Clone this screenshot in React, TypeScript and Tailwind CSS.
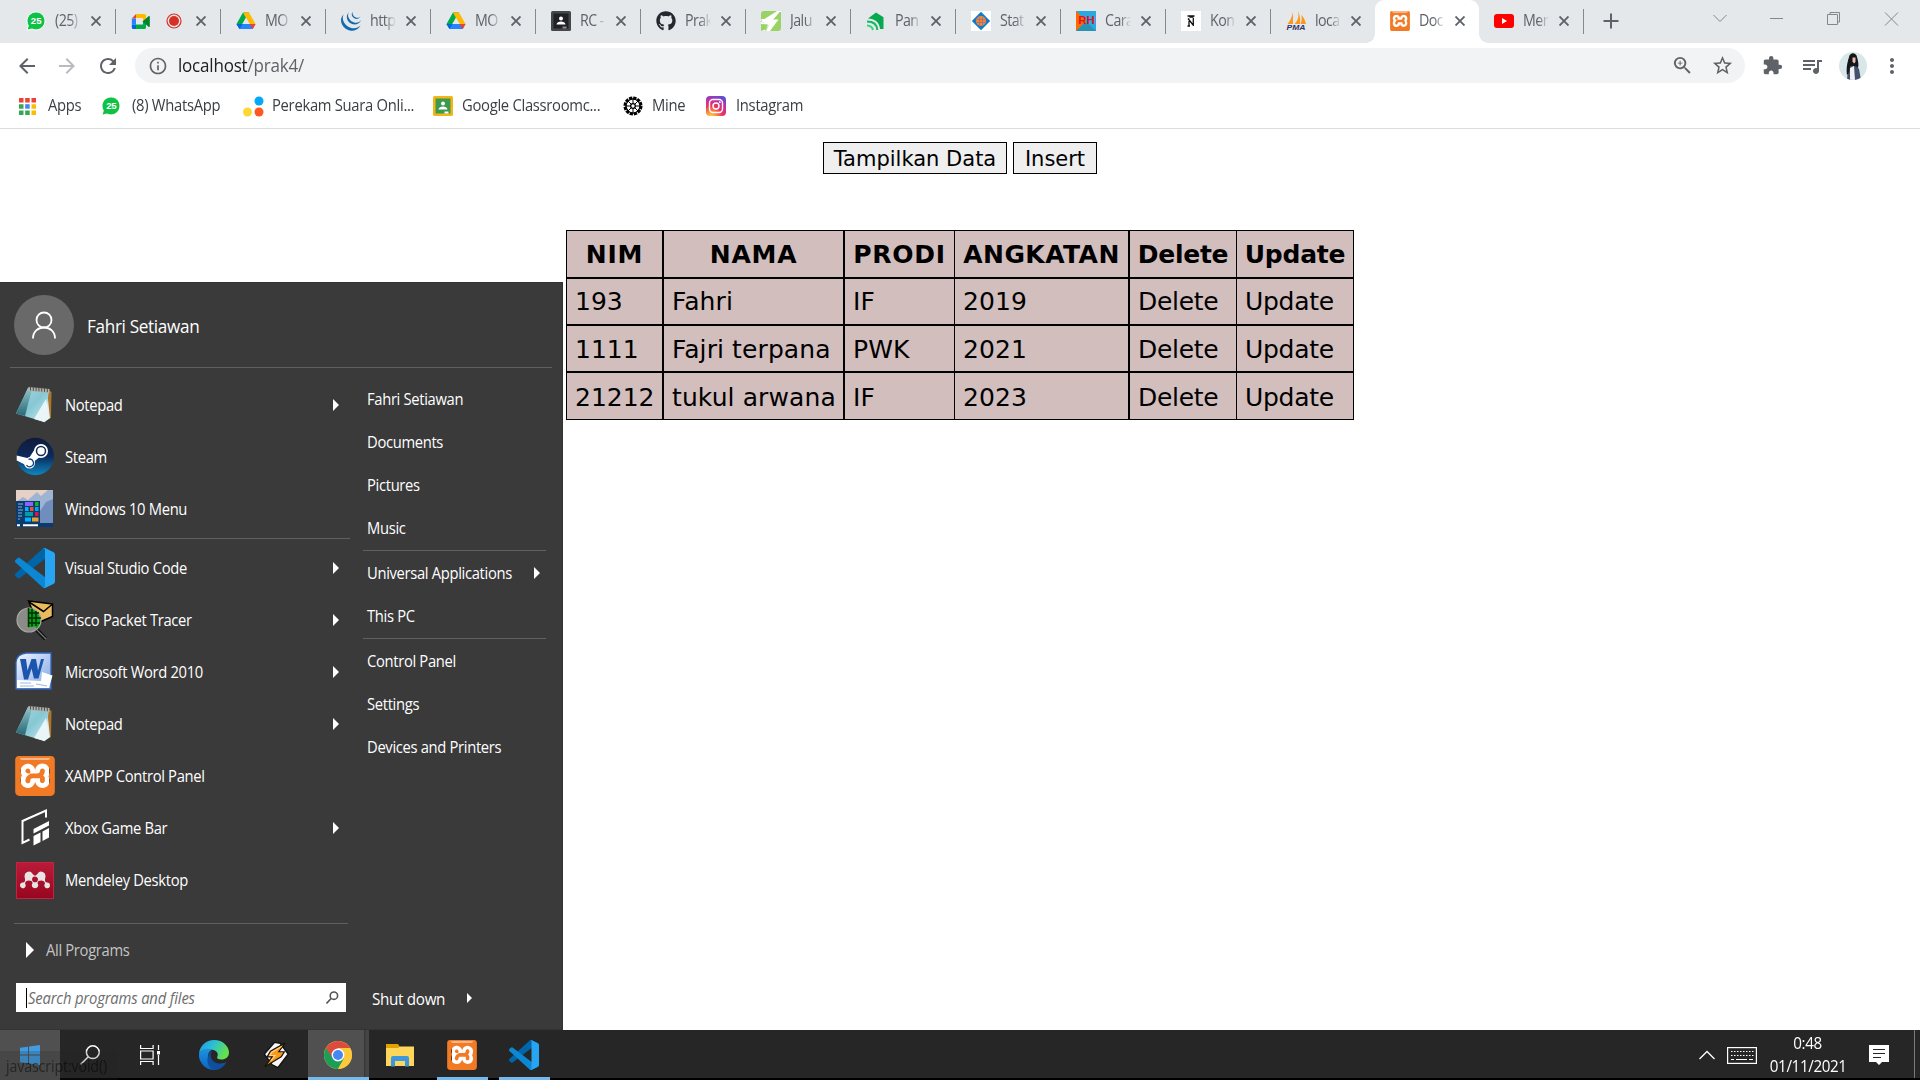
import React from "react";
import { FaGithub } from "react-icons/fa";
import { SiJquery, SiXampp, SiMendeley } from "react-icons/si";
import { MdExtension, MdQueueMusic, MdStarBorder, MdZoomIn, MdMoreVert, MdRefresh, MdArrowBack, MdArrowForward, MdInfoOutline } from "react-icons/md";

type P = { className?: string };

const WhatsApp = ({ className = "" }: P) => (
  <svg viewBox="0 0 20 20" className={className}>
    <path d="M1 19.2 2.3 14.6A9 9 0 1 1 6 18z" fill="#0fc144" stroke="#fff" strokeWidth="1" />
    <text x="10.2" y="13.4" fontSize="9.6" fontWeight="700" fill="#fff" textAnchor="middle" fontFamily="Liberation Sans, sans-serif">25</text>
  </svg>
);

const Meet = () => (
  <svg viewBox="0 0 20 20" className="size-5">
    <path d="M5 3h8.5a1.5 1.5 0 0 1 1.5 1.5V8l-3 2V7H5z" fill="#ffba00" />
    <path d="M5 3v4.5H.8z" fill="#ea4335" />
    <path d="M.8 7.500H5v6H.8z" fill="#2684fc" />
    <path d="M.8 13.500H5V18H2.300A1.500 1.500 0 0 1 .8 16.500z" fill="#0066da" />
    <path d="M5 13.500h7V10l3 2.500v4a1.500 1.500 0 0 1-1.500 1.500H5z" fill="#00ac47" />
    <path d="m11.500 10.400 6-5.200c.6-.5 1.300-.2 1.300.5v9.600c0 .7-.7 1-1.300.5z" fill="#00832d" />
  </svg>
);

const Drive = () => (
  <svg viewBox="0 0 20 18" className="size-5">
    <path d="M7 .5h6l-3 5.200z" fill="#188038" />
    <path d="M7 .500 10 5.700 4 16.500.500 12z" fill="#00ac47" />
    <path d="M7 .500h6l6.500 11.500h-6z" fill="#ffba00" />
    <path d="M.500 12h19l-2.800 5H3.500z" fill="#2684fc" />
    <path d="M13.500 12h6l-2.800 5z" fill="#ea4335" />
    <path d="M.500 12h6l-3 5z" fill="#0066da" />
    <path d="m10 5.700 3.600 6.300H6.400z" fill="#e4e8eb" />
  </svg>
);

const Classroom = ({ bg, board, edge }: { bg: string; board: string; edge: string }) => (
  <svg viewBox="0 0 20 20" className="size-5 shrink-0">
    <rect width="20" height="20" rx="1.500" fill={edge} />
    <rect x="2.500" y="2.500" width="15" height="15" fill={board} />
    <circle cx="10" cy="7.500" r="2" fill="#fff" />
    <path d="M5.500 13.500c0-2 2.500-3 4.500-3s4.500 1 4.500 3z" fill="#fff" />
    <rect x="11.500" y="15.500" width="4" height="2" fill={bg} />
  </svg>
);

const Jalur = () => (
  <svg viewBox="0 0 20 20" className="size-5">
    <rect width="20" height="20" rx="3" fill="#9ad268" />
    <path d="M16.500 0 6 8H0l2 4h7l-5 8H0v-8.500L5 8 16 0h2.500L12 8.500h5.500L9 20H5l4-8z" fill="#fff" />
    <path d="M16.500 0H20v2L11 9h4l-2 4-5 6.500L10 12H3l-3-2z" fill="#fff" />
    <path d="M18.500 1H20v7h-7z" fill="#9ad268" />
    <path d="m0 13 7 .500-2 5L0 20z" fill="#9ad268" />
  </svg>
);

const Pandi = () => (
  <svg viewBox="0 0 20 20" className="size-5">
    <path d="M2 7.500 10 1.500l7.500 4.800V18H14C13.500 11 9 8 2 7.500z" fill="#06a94d" />
    <path d="M1 10.500c6 0 10 3 10.300 8.500" fill="none" stroke="#15b862" strokeWidth="2" />
    <path d="M1 14.500c3.500.3 5.500 1.800 6 4.500" fill="none" stroke="#35d47d" strokeWidth="2" />
  </svg>
);

const Stat = () => (
  <svg viewBox="0 0 20 20" className="size-5">
    <rect width="20" height="20" fill="#fff" />
    <path d="m10 .8 9.200 9.200-9.200 9.200L.8 10z" fill="#1479c4" />
    <circle cx="10" cy="10" r="5" fill="#ef8644" />
    <path d="M6 8.500h8M6 11.500h8M8.500 6v8m3-8v8" stroke="#9b7273" strokeWidth=".8" />
  </svg>
);

const Rh = () => (
  <svg viewBox="0 0 20 20" className="size-5">
    <rect width="20" height="20" fill="#29a9df" />
    <path d="M0 0v20L10 10z" fill="#ff6a00" />
    <path d="m0 20 10-9 10 9z" fill="#2a91b0" />
    <text x="10.500" y="12.500" fontSize="11.500" fontWeight="700" fill="#e8101b" textAnchor="middle" fontFamily="Liberation Sans, sans-serif">RH</text>
  </svg>
);

const Kon = () => (
  <svg viewBox="0 0 20 20" className="size-5">
    <rect width="20" height="20" fill="#fff" />
    <path d="M6.500 5h7M8 7.500v7M12.300 7v8M7 7.500l5.500 7M6.500 15H9m-.5-9 4 0" stroke="#111" strokeWidth="1.300" fill="none" />
  </svg>
);

const Pma = () => (
  <svg viewBox="0 0 20 20" className="size-5">
    <path d="M7 1v12H1.500C4.500 9.500 6.300 5 7 1zM12 0c1 5 .5 9-3.500 13h5.500c.5-5-.2-9-2-13zM15.500 4c.5 4 0 7-1 9H20c-1-4-2.500-7-4.500-9z" fill="#f8981d" />
    <text x="10" y="19.300" fontSize="7.600" fontWeight="700" fontStyle="italic" fill="#33346b" textAnchor="middle" textLength="19" lengthAdjust="spacingAndGlyphs" fontFamily="Liberation Sans, sans-serif">PMA</text>
  </svg>
);

/* Orange tile whose cut-out glyph shows the white backing. */
const Xampp = ({ className = "" }: P) => (
  <span className={`relative grid shrink-0 ${className}`}>
    <span className="col-start-1 row-start-1 m-[15%] bg-white" />
    <SiXampp className="col-start-1 row-start-1 size-full text-[#f27a25]" />
    <span className="col-start-1 row-start-1 mx-[12%] mt-[4%] h-[7%] rounded-b-full bg-[#f5b78e]" />
  </span>
);

const YouTube = () => (
  <svg viewBox="0 0 20 20" className="size-5">
    <rect y="3" width="20" height="14" rx="3" fill="#f00" />
    <path d="m8 7 5 3-5 3z" fill="#fff" />
  </svg>
);

const Instagram = () => (
  <svg viewBox="0 0 20 20" className="size-5">
    <defs>
      <radialGradient id="ig" cx=".25" cy="1.050" r="1.150">
        <stop offset="0" stopColor="#ffd64f" />
        <stop offset=".25" stopColor="#fb8a3a" />
        <stop offset=".5" stopColor="#e9345f" />
        <stop offset=".75" stopColor="#c12fa6" />
        <stop offset="1" stopColor="#5b4ed8" />
      </radialGradient>
    </defs>
    <rect width="20" height="20" rx="4" fill="url(#ig)" />
    <rect x="3.500" y="3.500" width="13" height="13" rx="3.500" fill="none" stroke="#fff" strokeWidth="1.400" />
    <circle cx="10" cy="10" r="3" fill="none" stroke="#fff" strokeWidth="1.400" />
    <circle cx="13.800" cy="6.200" r=".9" fill="#fff" />
  </svg>
);

const Wheel = () => (
  <svg viewBox="0 0 20 20" className="size-5">
    <circle cx="10" cy="10" r="8" fill="none" stroke="#000" strokeWidth="3" strokeDasharray="3.200 .99" />
    <circle cx="10" cy="10" r="7" fill="none" stroke="#000" strokeWidth="1.200" />
    <circle cx="10" cy="10" r="2.300" fill="none" stroke="#000" strokeWidth="1.300" />
    <path d="M10 2v6M10 12v6M2 10h6m4 0h6M4.500 4.500l4 4m3 3 4 4m0-11-4 4m-3 3-4 4" stroke="#000" strokeWidth="1" />
  </svg>
);

const VsCode = ({ className = "" }: P) => (
  <svg viewBox="0 0 100 100" className={className}>
    <path d="M96.461 10.796 75.857.876a6.230 6.230 0 0 0-7.107 1.207l-67.451 61.500a4.167 4.167 0 0 0 .004 6.162l5.510 5.009a4.167 4.167 0 0 0 5.320.236l81.228-61.620c2.725-2.067 6.639-.124 6.639 3.297v-.240a6.250 6.250 0 0 0-3.539-5.630z" fill="#0065a9" />
    <path d="m96.461 89.204-20.604 9.920a6.230 6.230 0 0 1-7.107-1.207l-67.451-61.500a4.167 4.167 0 0 1 .004-6.162l5.510-5.009a4.167 4.167 0 0 1 5.320-.236l81.228 61.620c2.725 2.067 6.639.124 6.639-3.297v.240a6.250 6.250 0 0 1-3.539 5.630z" fill="#0b87d3" />
    <path d="M75.858 99.126a6.232 6.232 0 0 1-7.108-1.210c2.306 2.307 6.250.674 6.250-2.588V4.672c0-3.262-3.944-4.895-6.250-2.589a6.232 6.232 0 0 1 7.108-1.210l20.600 9.908A6.250 6.250 0 0 1 100 16.413v67.174a6.250 6.250 0 0 1-3.541 5.633z" fill="#27a5f2" />
  </svg>
);

const NotepadIcon = () => (
  <svg viewBox="0 0 40 40" className="size-10 shrink-0">
    <defs>
      <linearGradient id="np" x1="0" y1="0" x2="1" y2="1">
        <stop offset="0" stopColor="#a9d9df" />
        <stop offset=".5" stopColor="#86c7d4" />
        <stop offset="1" stopColor="#c9edf3" />
      </linearGradient>
      <linearGradient id="np2" x1="0" y1="0" x2="0" y2="1">
        <stop offset="0" stopColor="#8fc4cc" />
        <stop offset="1" stopColor="#286874" />
      </linearGradient>
    </defs>
    <path d="m33 5 3.500 2-.500 26-4 2z" fill="#a9762b" />
    <path d="m32 5 3 28-6 4.500z" fill="#dfe9ea" />
    <path d="m13 3 21 2.500-4.500 31.500L1 28.500z" fill="url(#np)" />
    <path d="M13 3 1 28.500l9 2.500 7-27z" fill="url(#np2)" />
    <path d="m31 14 3.500 19-5.500 4-10-3z" fill="#e9f5f6" />
    <path d="m13.500 2 21 2v4l-22-2z" fill="#b3b1a8" />
    <path d="M15.500 1.500v4m2.800-3.700v4m2.800-3.700v4m2.800-3.800v4m2.800-3.700v4m2.800-3.700v4m2.800-3.700v4" stroke="#4c5052" strokeWidth="1" />
  </svg>
);

const SteamIcon = () => (
  <svg viewBox="0 0 40 40" className="size-10 shrink-0">
    <defs>
      <linearGradient id="st" x1="0" y1="0" x2="0" y2="1">
        <stop offset="0" stopColor="#111a38" />
        <stop offset=".5" stopColor="#0c2a5c" />
        <stop offset="1" stopColor="#0e87c1" />
      </linearGradient>
    </defs>
    <circle cx="20.300" cy="19.500" r="18.700" fill="url(#st)" />
    <path d="M1.700 18.500v5c3 1.500 6 3 8.500 4l8 0 1.500-3.500 7-5.500-6.500-7-5.500 8.500-2.500 1z" fill="#fff" />
    <circle cx="26" cy="14" r="7" fill="#fff" />
    <circle cx="26" cy="14" r="4.500" fill="#fff" stroke="#152a52" strokeWidth="1.500" />
    <circle cx="14.500" cy="26" r="5.500" fill="#fff" />
    <path d="M11.500 28a3.800 3.800 0 1 0 2-5.700" fill="none" stroke="#153b72" strokeWidth="1.300" />
  </svg>
);

const Win10Menu = () => (
  <svg viewBox="0 0 40 40" className="size-10 shrink-0">
    <rect x="1" y="1" width="37" height="37" fill="#e6d1c6" />
    <path d="M1 13 8 8l5 3 9-8 4 4 7-6h5v30H1z" fill="#9fb4d3" />
    <path d="M25 22 31 13l7-3v26H25z" fill="#6f8ebd" />
    <rect x="1" y="12" width="24" height="22" fill="#0c3c6e" />
    <rect x="1" y="34" width="37" height="4" fill="#0a3a70" />
    <path d="M3 15h5M3 18h4M3 21h5M3 24h4M3 27h4M3 30h2" stroke="#8fb0d0" strokeWidth="1" />
    <rect x="10" y="13" width="8" height="4" fill="#8c62ff" />
    <rect x="20" y="13" width="3.500" height="4" fill="#0eb524" />
    <rect x="10" y="18" width="3.500" height="4" fill="#00b4ff" />
    <rect x="15" y="18" width="3.500" height="4" fill="#f0502b" />
    <rect x="20" y="18" width="3.500" height="4" fill="#00a6f5" />
    <rect x="10" y="23" width="8" height="4" fill="#079ba8" />
    <rect x="20" y="23" width="3.500" height="4" fill="#e2134b" />
    <rect x="10" y="28.500" width="6" height="4" fill="#00b4ff" />
    <rect x="17" y="28.500" width="6.500" height="4" fill="#e8a22a" />
    <path d="M2 36.300h3m3 0h15" stroke="#fff" strokeWidth="2" />
  </svg>
);

const Cisco = () => (
  <svg viewBox="0 0 40 40" className="size-10 shrink-0">
    <path d="M13.500 1 37.500 4v12.500l-15 6.500z" fill="#e8bb5c" stroke="#000" strokeWidth="1.500" />
    <path d="m14 2 14.500 9.500 8.500-7" fill="none" stroke="#000" strokeWidth="1.500" />
    <path d="m21 29 9.500 10" stroke="#111" strokeWidth="4" />
    <path d="m22 30 9 9" stroke="#777" strokeWidth="1.200" />
    <circle cx="14" cy="20" r="12" fill="#8b8b87" stroke="#a8a8a4" strokeWidth="1.200" />
    <path d="M13 8.500a12 12 0 0 1 9 20l-2-2-7 1z" fill="#04a414" />
    <path d="M13 13h11M13 18h13M13 23h12M17 8.500v18m4-15.500v15M13.500 8v19" stroke="#012e05" strokeWidth="1.500" />
  </svg>
);

const Word = () => (
  <svg viewBox="0 0 40 40" className="size-10 shrink-0">
    <defs>
      <linearGradient id="wd" x1="0" y1="0" x2="1" y2="1">
        <stop offset="0" stopColor="#f4f8fe" />
        <stop offset=".5" stopColor="#b7cdf2" />
        <stop offset="1" stopColor="#7fa4e3" />
      </linearGradient>
    </defs>
    <path d="M1 10Q2 2 11 1h25v36H1z" fill="url(#wd)" stroke="#2f63b7" strokeWidth="1.300" />
    <path d="m2 28 24 1 1-9 10.500 3.500L34 36H2z" fill="#fff" />
    <path d="m5 31 11 0m-11 3h14m2-2 11 2" stroke="#9bb6e6" strokeWidth="1" />
    <path d="m5 7 6 0 1.500 11.500L16.500 7h4.500l2 11.500L26 7h3l-5.500 19.500h-4.500l-2.500-10-3.500 11H9z" fill="#1c55ad" />
  </svg>
);

const XboxBar = () => (
  <svg viewBox="0 0 40 40" className="size-10 shrink-0">
    <path d="M31 9.500V2.500L7.500 13v22l7-3.500" fill="none" stroke="#fff" strokeWidth="2" />
    <path d="m18.500 21 15.500-8v4.500L18.500 25.500z" fill="#fff" />
    <path d="m18.500 28 7-3.500V34l-7 3.500zM27.500 23.500 34 20v9.500L27.500 33z" fill="#fff" />
  </svg>
);

const Mendeley = () => (
  <span className="flex size-10 shrink-0 items-center justify-center">
    <span className="flex h-[37px] w-[38px] items-center justify-center border border-[#c12440] bg-gradient-to-b from-[#b91a38] to-[#98061f]">
      <SiMendeley className="size-[30px] text-[#e8e4e4]" />
    </span>
  </span>
);

const Edge = () => (
  <svg viewBox="0 0 30 30" className="size-[30px]">
    <defs>
      <linearGradient id="eg" x1="0" y1="0" x2="1" y2=".4">
        <stop offset="0" stopColor="#1f95e6" />
        <stop offset=".5" stopColor="#2cc0d3" />
        <stop offset="1" stopColor="#63e04a" />
      </linearGradient>
      <linearGradient id="eb" x1="0" y1="0" x2="0" y2="1">
        <stop offset="0" stopColor="#1d94e0" />
        <stop offset="1" stopColor="#0b63c4" />
      </linearGradient>
    </defs>
    <path d="M0 14C.5 6 7 0 15 0c9 0 15 6.500 15 12.500 0 4.500-3.500 7-7.500 7-3.500 0-5-1.300-4.300-2.500 1.500-2.500.3-6-3.700-7C9 8.500 2 9 0 14z" fill="url(#eg)" />
    <path d="M0 14C1.500 9 8 7.500 13.500 9.500 9.500 11 8 15.500 9.500 20c1.500 4.500 4.500 8 9 9.500A15 15 0 0 1 0 14z" fill="url(#eb)" />
    <path d="M13 11c-3.500 5 0 12 7 12.500 3.500.2 6-.8 7.300-1.400C25.500 26 21.500 30 16 30 10 29 7 22 9 16.500c.8-2.700 2.200-4.500 4-5.500z" fill="#0f4f9e" />
  </svg>
);

const Bolt = () => (
  <svg viewBox="0 0 30 30" className="size-[28px]">
    <path d="m13.500 1.500 6 1L28 14 17 28.500l-6-3L2.500 14z" fill="#f7f7f7" stroke="#111" strokeWidth="1.500" />
    <path d="M25 2 9 11 5.500 17h5.500L3 27.500 20.500 17l3.500-5.500H18z" fill="#f99a1d" stroke="#1b1206" strokeWidth="1.300" />
    <path d="M21 6 10.500 12l-2 3.500h5.500L9.500 21" fill="none" stroke="#ffd38a" strokeWidth="1.200" />
  </svg>
);

const Chrome = () => (
  <svg viewBox="0 0 28 28" className="size-7">
    <circle cx="14" cy="14" r="14" fill="#fdc93a" />
    <path d="M14 14 1.900 7A14 14 0 0 0 14 28l6-10.500z" fill="#1b9e57" />
    <path d="M1.900 7A14 14 0 0 1 26.100 7H14l-5.500 9.500z" fill="#dd4b3e" />
    <path d="M26.100 7H14v7l6 3.500L14 28A14 14 0 0 0 26.100 7z" fill="#fdc93a" />
    <circle cx="14" cy="14" r="6.400" fill="#fff" />
    <circle cx="14" cy="14" r="5" fill="#4587f4" />
  </svg>
);

const Explorer = () => (
  <svg viewBox="0 0 28 24" className="h-6 w-7">
    <path d="M0 1h12l2 3v19H0z" fill="#e2a100" />
    <path d="M0 5h12l2-1.500h14V23H0z" fill="#ffd65c" />
    <path d="M5 23.500v-8.500q0-2 2-2h14q2 0 2 2v8.500h-4v-5.500H9v5.500z" fill="#3c98de" />
  </svg>
);

const Arrow = ({ className = "" }: P) => (
  <svg viewBox="0 0 6 12" className={className}>
    <path d="M0 0l6 6-6 6z" fill="#fff" />
  </svg>
);

const MeetIcons = () => (
  <span className="flex shrink-0">
    <Meet />
    <svg viewBox="0 0 20 20" className="ml-[13px] size-5">
      <circle cx="10" cy="10" r="7" fill="none" stroke="#d93025" strokeWidth="1.200" />
      <circle cx="10" cy="10" r="5" fill="#d93025" />
    </svg>
  </span>
);

const tabs: { icon: React.ReactNode; title: string; active?: boolean }[] = [
  { icon: <WhatsApp className="size-5" />, title: "(25)" },
  { icon: <MeetIcons />, title: "" },
  { icon: <Drive />, title: "MO" },
  { icon: <SiJquery className="size-5 text-[#1169ae]" />, title: "http" },
  { icon: <Drive />, title: "MO" },
  { icon: <Classroom bg="#8a8d91" board="#202124" edge="#44474b" />, title: "RC -" },
  { icon: <FaGithub className="size-5 text-[#24292f]" />, title: "Prak" },
  { icon: <Jalur />, title: "Jalu" },
  { icon: <Pandi />, title: "Pan" },
  { icon: <Stat />, title: "Stat" },
  { icon: <Rh />, title: "Cara" },
  { icon: <Kon />, title: "Kon" },
  { icon: <Pma />, title: "loca" },
  { icon: <Xampp className="size-5" />, title: "Doc", active: true },
  { icon: <YouTube />, title: "Men" },
];

const Cross = () => (
  <svg viewBox="0 0 10 10" className="size-[10px] shrink-0">
    <path d="m.5.5 9 9m0-9-9 9" stroke="#5f6368" strokeWidth="1.900" />
  </svg>
);

const TabStrip = () => (
  <div className="flex h-[43px] shrink-0 bg-[#e4e8eb] pl-[11px]">
    {tabs.map((t, i) => (
      <div
        key={i}
        className={`relative flex h-[43px] items-center pl-[15px] ${i === 12 || i === 13 ? "w-[104px]" : "w-[105px]"} ${t.active ? "rounded-t-[9px] bg-white" : ""}`}
      >
        <span className="flex shrink-0 -translate-y-px">{t.icon}</span>
        {t.title && (
          <span className="ml-[9px] w-[27px] -translate-y-px text-[15.5px] whitespace-nowrap text-[#5f6368] [mask-image:linear-gradient(to_right,black_55%,transparent_97%)]">
            <span className="inline-block origin-left scale-x-[0.92] tracking-[-0.04em]">{t.title}</span>
          </span>
        )}
        <span className="absolute top-[16px] left-[80px]"><Cross /></span>
        {i !== 12 && !t.active && <span className="absolute top-[9px] right-0 h-[25px] w-px bg-[#85898d]" />}
        {t.active && (
          <>
            <span className="absolute bottom-0 left-[-9px] size-[9px] bg-[radial-gradient(circle_at_0_0,transparent_8.5px,white_9px)]" />
            <span className="absolute right-[-9px] bottom-0 size-[9px] bg-[radial-gradient(circle_at_100%_0,transparent_8.5px,white_9px)]" />
          </>
        )}
      </div>
    ))}
    <svg viewBox="0 0 16 16" className="mt-[13px] ml-[19px] size-4 shrink-0">
      <path d="M8 .5v15M.5 8h15" stroke="#5f6368" strokeWidth="2" />
    </svg>
    <svg viewBox="0 0 200 20" className="mt-[9px] ml-auto mr-[12px] h-5 w-[200px] shrink-0" fill="none" stroke="#85888b" strokeWidth="1">
      <path d="m5.500 6 6.500 6.500L18.500 6M62 9.500h13M119.500 5.500h10v10h-10zM122 5.500v-2h9.500v9.500h-2M177 3.500l13 13m0-13-13 13" />
    </svg>
  </div>
);

const Bookmark = ({ icon, text, className }: { icon: React.ReactNode; text: string; className: string }) => (
  <div className={className}>
    {icon}
    <span className="inline-block origin-left scale-x-[0.955] whitespace-nowrap">{text}</span>
  </div>
);

const Toolbar = () => (
  <div className="h-[86px] shrink-0 border-b border-[#dadce0] bg-white">
    <div className="flex h-[45px] items-center pl-[15px] text-[#5f6368]">
      <MdArrowBack className="size-6" />
      <MdArrowForward className="ml-4 size-6 text-[#b9bbbe]" />
      <MdRefresh className="ml-[17px] size-6" />
      <div className="ml-[15px] flex h-[35px] w-[1610px] items-center rounded-full bg-[#f1f3f4] pl-[13px]">
        <MdInfoOutline className="size-5" />
        <span className="ml-[10px] inline-block origin-left scale-x-[0.945] text-[18px] tracking-[-0.012em] text-[#5f6368]">
          <span className="text-[#202124]">localhost</span>/prak4/
        </span>
        <MdZoomIn className="ml-auto size-[23px]" />
        <MdStarBorder className="mr-[11px] ml-[17px] size-[23px]" />
      </div>
      <MdExtension className="ml-[17px] size-[21px]" />
      <MdQueueMusic className="ml-[17px] size-[24px]" />
      <svg viewBox="0 0 28 28" className="ml-[15px] size-7">
        <defs><clipPath id="av"><circle cx="14" cy="14" r="14" /></clipPath></defs>
        <g clipPath="url(#av)">
          <rect width="28" height="28" fill="#d9e7ea" />
          <path d="M10 5c1-5 7-5 8 0 1 4 2 7 1 11l-3 2-5 0c-2-4-2-9-1-13z" fill="#161519" />
          <path d="M13.500 5.500h3v4.500l-1.500 1.500-1.500-2z" fill="#e6c0ac" />
          <path d="M9 16c3-3 8-3 11 1l2 11H8z" fill="#45506c" />
          <path d="m11 16 4-2 1 14h-5z" fill="#f0f0f2" />
          <path d="M11 4c-1 5 1 8-.500 14-.500 3-1.500 4-2.500 5-1-6 0-14 3-19z" fill="#161519" />
        </g>
      </svg>
      <MdMoreVert className="ml-[13px] size-[24px]" />
    </div>
    <div className="flex h-[36px] items-center text-[15.5px] tracking-[-0.02em] text-[#3c4043]">
      <Bookmark
        className="flex w-[82px] items-center gap-[12px] pl-[19px]"
        text="Apps"
        icon={
          <svg viewBox="0 0 17 17" className="size-[17px] shrink-0">
            <path d="M0 0h4.500v4.500H0zM6.200 0h4.500v4.500H6.200zM12.500 0H17v4.500h-4.500z" fill="#ea4335" />
            <path d="M0 6.200h4.500v4.500H0zM0 12.500h4.500V17H0z" fill="#34a853" />
            <path d="M6.200 6.200h4.500v4.500H6.200z" fill="#4285f4" />
            <path d="M6.200 12.500h4.500V17H6.200z" fill="#34a853" />
            <path d="M12.500 6.200H17v4.500h-4.500zM12.500 12.500H17V17h-4.500z" fill="#fbbc04" />
          </svg>
        }
      />
      <Bookmark className="flex w-[160px] items-center gap-[11px] pl-[19px]" text="(8) WhatsApp" icon={<WhatsApp className="size-5 shrink-0" />} />
      <Bookmark
        className="flex w-[191px] items-center gap-[8px]"
        text="Perekam Suara Onli..."
        icon={
          <svg viewBox="0 0 21 21" className="ml-[1px] size-[21px] shrink-0">
            <circle cx="16" cy="5" r="4.500" fill="#03a9f4" />
            <circle cx="4.500" cy="16" r="4.500" fill="#fdd835" />
            <circle cx="16" cy="16" r="4.500" fill="#ff5722" />
          </svg>
        }
      />
      <Bookmark className="flex w-[190px] items-center gap-[9px]" text="Google Classroomc..." icon={<Classroom bg="#fff" board="#3c9a4e" edge="#f4b616" />} />
      <Bookmark className="flex w-[83px] items-center gap-[9px]" text="Mine" icon={<Wheel />} />
      <Bookmark className="flex items-center gap-[10px]" text="Instagram" icon={<Instagram />} />
    </div>
  </div>
);

const rows = [
  ["193", "Fahri", "IF", "2019"],
  ["1111", "Fajri terpana", "PWK", "2021"],
  ["21212", "tukul arwana", "IF", "2023"],
];

const Page = () => (
  <main className="flex grow flex-col items-center bg-white pt-[13px] font-['DejaVu_Sans',sans-serif] text-black">
    <div className="flex gap-[6px]">
      <button className="h-[32px] w-[184px] border border-black bg-[#efefef] pt-[2px] text-[21px] leading-[28px]">Tampilkan Data</button>
      <button className="h-[32px] w-[84px] border border-black bg-[#efefef] pt-[2px] text-[21px] leading-[28px]">Insert</button>
    </div>
    <table className="mt-[56px] w-[788px] table-fixed border-separate border-spacing-0 border border-r-0 border-b-0 border-black bg-[#d2bebd] text-[25px] leading-[30px]">
      <colgroup>
        <col className="w-[97px]" />
        <col className="w-[181px]" />
        <col className="w-[110px]" />
        <col className="w-[175px]" />
        <col className="w-[107px]" />
        <col className="w-[117px]" />
      </colgroup>
      <thead>
        <tr className="h-[48px]">
          {["NIM", "NAMA", "PRODI", "ANGKATAN", "Delete", "Update"].map((h, i) => (
            <th
              key={h}
              className={`border-b-2 border-black pt-[2px] text-center font-bold whitespace-nowrap ${i === 3 ? "tracking-[0.018em]" : i < 3 ? "tracking-[0.03em]" : "tracking-[-0.01em]"} ${i === 2 || i === 4 || i === 5 ? "border-r" : "border-r-2"}`}
            >
              {h}
            </th>
          ))}
        </tr>
      </thead>
      <tbody>
        {rows.map((r, ri) => (
          <tr key={r[0]} className="h-[47px]">
            {[...r, "Delete", "Update"].map((c, i) => (
              <td
                key={i}
                className={`border-black pl-[8px] whitespace-nowrap ${i > 3 ? "tracking-[-0.012em]" : i === 0 ? "tracking-normal" : "tracking-[0.004em]"} ${ri === 0 ? "pt-px" : "pt-[3px]"} ${ri === 2 ? "border-b" : "border-b-2"} ${i === 2 || i === 4 || i === 5 ? "border-r" : "border-r-2"}`}
              >
                {c}
              </td>
            ))}
          </tr>
        ))}
      </tbody>
    </table>
  </main>
);

const Label = ({ children }: { children: React.ReactNode }) => (
  <span className="inline-block origin-left translate-y-px scale-x-[0.952] whitespace-nowrap">{children}</span>
);

const programs: { icon: React.ReactNode; label: string; sub?: boolean }[] = [
  { icon: <NotepadIcon />, label: "Notepad", sub: true },
  { icon: <SteamIcon />, label: "Steam" },
  { icon: <Win10Menu />, label: "Windows 10 Menu" },
  { icon: <VsCode className="size-10 shrink-0" />, label: "Visual Studio Code", sub: true },
  { icon: <Cisco />, label: "Cisco Packet Tracer", sub: true },
  { icon: <Word />, label: "Microsoft Word 2010", sub: true },
  { icon: <NotepadIcon />, label: "Notepad", sub: true },
  { icon: <Xampp className="size-10" />, label: "XAMPP Control Panel" },
  { icon: <XboxBar />, label: "Xbox Game Bar", sub: true },
  { icon: <Mendeley />, label: "Mendeley Desktop" },
];

const places: { label: string; sub?: boolean; line?: boolean }[] = [
  { label: "Fahri Setiawan" },
  { label: "Documents" },
  { label: "Pictures" },
  { label: "Music", line: true },
  { label: "Universal Applications", sub: true },
  { label: "This PC", line: true },
  { label: "Control Panel" },
  { label: "Settings" },
  { label: "Devices and Printers" },
];

const StartMenu = () => (
  <aside className="absolute bottom-[50px] left-0 flex h-[748px] w-[563px] flex-col border-t border-r border-b border-[#333] bg-[#3a3a3a] text-[15.5px] tracking-[-0.022em] text-white">
    <div className="mx-[10px] flex h-[85px] shrink-0 items-center border-b border-[#606060] pl-1">
      <span className="flex size-[60px] items-center justify-center rounded-full bg-[#696969]">
        <svg viewBox="0 0 24 28" className="h-7 w-6" fill="none" stroke="#fff" strokeWidth="1.800">
          <circle cx="12" cy="9" r="7.500" />
          <path d="M1 27.500c0-7 5-11 11-11s11 4 11 11" />
        </svg>
      </span>
      <span className="ml-[13px] text-[18px]"><Label>Fahri Setiawan</Label></span>
    </div>
    <div className="flex grow">
      <div className="flex w-[350px] flex-col pt-[11px]">
        {programs.map((p, i) => (
          <React.Fragment key={i}>
            <div className="flex h-[52px] items-center pl-[15px]">
              {p.icon}
              <span className="ml-[10px]"><Label>{p.label}</Label></span>
              {p.sub && <Arrow className="mr-[11px] ml-auto h-3 w-[6px]" />}
            </div>
            {i === 2 && <div className="my-[3px] ml-[14px] h-px shrink-0 bg-[#606060]" />}
          </React.Fragment>
        ))}
        <div className="mt-[17px] ml-[14px] h-px w-[334px] bg-[#606060]" />
        <div className="flex h-[51px] items-center pl-[26px] text-[#c4c4c4]">
          <Arrow className="h-4 w-2" />
          <span className="ml-[12px]"><Label>All Programs</Label></span>
        </div>
        <div className="mt-[8px] ml-4 flex h-[29px] w-[330px] items-center bg-white pl-[10px]">
          <span className="h-[20px] w-px bg-black" />
          <span className="ml-[1px] tracking-[-0.01em] text-[#6d6d6d] italic"><Label>Search programs and files</Label></span>
          <svg viewBox="0 0 14 14" className="mr-[7px] ml-auto size-[13px]" fill="none" stroke="#555" strokeWidth="1.700">
            <circle cx="8.500" cy="5" r="4" />
            <path d="m5.500 8-5 5.500" />
          </svg>
        </div>
      </div>
      <div className="flex w-[196px] flex-col pt-[9px] pl-[13px]">
        {places.map((p, i) => (
          <React.Fragment key={i}>
            <div className="flex h-[43px] items-center pl-1">
              <Label>{p.label}</Label>
              {p.sub && <Arrow className="mr-[6px] ml-auto h-3 w-[6px]" />}
            </div>
            {p.line && <div className="mt-px h-px shrink-0 bg-[#606060]" />}
          </React.Fragment>
        ))}
        <div className="mt-auto mb-[9px] flex h-[44px] items-center pl-[9px] text-[16px]">
          <Label>Shut down</Label>
          <Arrow className="ml-[18px] h-[10px] w-[5px]" />
        </div>
      </div>
    </div>
  </aside>
);

const Taskbar = () => (
  <footer className="relative flex h-[50px] shrink-0 border-b-2 border-black bg-[#262626] text-white">
    <div className="flex h-[50px] w-[60px] shrink-0 items-center justify-center bg-[#505050]">
      <svg viewBox="0 0 20 20" className="size-5" fill="#429ce3">
        <path d="M0 2.800 8 1.700v7.800H0zM9 1.500 20 0v9.500H9zM0 10.500h8v7.800L0 17.200zM9 10.500h11V20L9 18.500z" />
      </svg>
    </div>
    <div className="flex h-[50px] w-[60px] items-center justify-center">
      <svg viewBox="0 0 20 20" className="size-5" fill="none" stroke="#fff" strokeWidth="1.500">
        <circle cx="12.800" cy="7.200" r="6.400" />
        <path d="M8.300 11.700.5 19.500" />
      </svg>
    </div>
    <div className="flex h-[50px] w-[60px] items-center justify-center">
      <svg viewBox="0 0 20 20" className="size-5" fill="none" stroke="#fff" strokeWidth="1.200">
        <path d="M.6 0v3.500h12.500V0M.6 20v-3.500h12.500V20M.6 6h12.500v8H.6zM18.500 0v5m0 5v10" />
        <path d="M17 6h3v3.500h-3z" fill="#fff" stroke="none" />
      </svg>
    </div>
    <div className="flex h-[50px] w-[68px] items-center justify-center"><Edge /></div>
    <div className="flex h-[50px] w-[60px] items-center justify-center pr-[5px]"><Bolt /></div>
    <div className="flex h-[50px] w-[61px] items-center border-b-[3px] border-[#76b9ed] bg-gradient-to-r from-[#505050] from-[56px] via-[#333] via-[56px] to-[#454545] to-[58px] pt-[3px] pl-[16px]"><Chrome /></div>
    <div className="flex h-[50px] w-[63px] items-center justify-center pr-[2px]"><Explorer /></div>
    <div className="ml-[5px] flex h-[50px] w-[51px] items-center border-b-[3px] border-[#76b9ed] pt-[3px] pl-[10px]"><Xampp className="size-[30px]" /></div>
    <div className="ml-[11px] flex h-[50px] w-[51px] items-center border-b-[3px] border-[#76b9ed] pt-[3px] pl-[10px]"><VsCode className="size-[30px]" /></div>
    <div className="ml-auto flex h-[50px] items-center">
      <svg viewBox="0 0 16 10" className="size-4" fill="none" stroke="#fff" strokeWidth="1.300"><path d="m.5 9 7.500-7.500L15.500 9" /></svg>
      <svg viewBox="0 0 30 17" className="mt-px ml-3 h-[17px] w-[30px]" fill="none" stroke="#fff" strokeWidth="1.200">
        <rect x=".6" y=".6" width="28.800" height="15.800" />
        <path d="M4 4.500h23M4 8.500h23" strokeDasharray="1.500 1.500" />
        <path d="M4 12.500h3m2 0h11m2 0h4" />
      </svg>
      <div className="ml-[10px] flex w-[82px] flex-col items-center text-[15.5px] leading-[23px] tracking-[-0.025em]">
        <span className="inline-block scale-x-[0.98]">0:48</span>
        <span className="inline-block scale-x-[0.98]">01/11/2021</span>
      </div>
      <svg viewBox="0 0 20 20" className="ml-[20px] size-5" fill="#fff">
        <path d="M0 0h20v17h-7l-3 3-3-3H0z" />
        <path d="M4 4.500h12M4 8.500h12M4 12.500h8" stroke="#262626" strokeWidth="1.200" />
      </svg>
      <span className="mr-[5px] mb-[2px] ml-[25px] h-[48px] w-px bg-[#7a7a7a]" />
    </div>
    <div className="absolute bottom-[-2px] left-0 flex h-[29px] w-[118px] items-center rounded-tr-md bg-[#1e2220]/20 pl-[6px] text-[16px] text-black/50">
      <span className="inline-block origin-left scale-x-[0.89] tracking-[-0.01em]">javascript:void()</span>
    </div>
  </footer>
);

export default function App() {
  return (
    <div className="relative flex h-[1080px] w-[1920px] flex-col overflow-hidden bg-white font-['Open_Sans','Noto_Sans',sans-serif]">
      <TabStrip />
      <Toolbar />
      <Page />
      <Taskbar />
      <StartMenu />
    </div>
  );
}
